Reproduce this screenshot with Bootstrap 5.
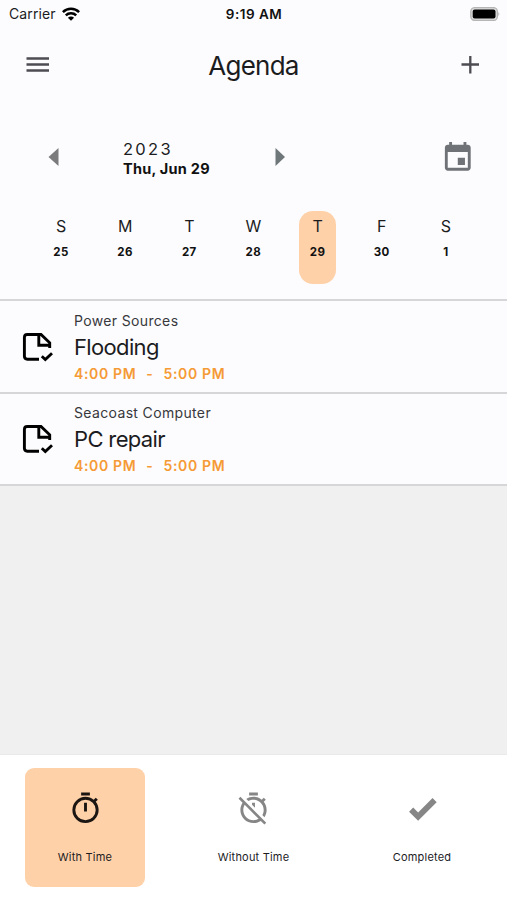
<!DOCTYPE html>
<html lang="en">
<head>
<meta charset="utf-8">
<meta name="viewport" content="width=device-width, initial-scale=1">
<title>Agenda</title>
<link href="https://cdn.jsdelivr.net/npm/bootstrap@5.3.0/dist/css/bootstrap.min.css" rel="stylesheet">
<style>
body{font-family:Inter,"Liberation Sans",sans-serif;background:#f0f0f0;color:#1c1c1f;height:900px;overflow:hidden}
svg{display:block;flex:none}
.t{white-space:nowrap;display:block}
.panel{background:#fcfcfe}
.status{height:27px;padding:0 7px 0 9px;line-height:27px}
.carrier{width:53px;font-size:14px;letter-spacing:.1px}
.clock{font-weight:600;font-size:13.5px;letter-spacing:.5px;color:#111;padding:1px 0 0 1px}
.titlebar{height:75px;padding:1px 25px 0}
.title{font-size:26px;line-height:36px;letter-spacing:-.75px;font-weight:400;padding-top:1px}
.datebar{height:109px;padding:36px 32px 0 47px}
.year{font-size:16.5px;line-height:20px;letter-spacing:2.3px}
.date{font-size:14.5px;line-height:20px;font-weight:700;letter-spacing:.25px;color:#111}
.datebox{width:151px;margin-left:64px;padding-top:1px}
.week{height:88px;padding:0 29px}
.day{width:37px;height:73px;border-radius:14px;padding-top:5px}
.picked{background:#ffd1a9}
.dow{font-size:16px;line-height:20px}
.num{font-size:11.5px;line-height:20px;font-weight:700;margin-top:6px;letter-spacing:.5px;color:#111}
.entry{height:93px;border-top:2px solid #d6d6d8;padding:10px 22px 0}
.entry + .entry{height:92px;padding-top:9px}
.entries{border-bottom:2px solid #d6d6d8}
.who{font-size:14px;line-height:20px;letter-spacing:.35px;color:#38383c}
.what{font-size:22px;line-height:33px;letter-spacing:-.65px}
.when{font-size:14px;line-height:20px;font-weight:600;letter-spacing:.65px;color:#f59a35}
.dash{margin:0 10px}
.tabs{height:146px;padding:13px 25px 0;background:#fff;border-top:1px solid #e9e9e9}
.tab{width:120px;height:119px;border-radius:9px;padding-top:23px}
.tab-label{font-size:11px;line-height:16px;margin-top:23px;letter-spacing:.2px}
</style>
</head>
<body class="d-flex flex-column">
<svg class="d-none"><symbol id="job" viewBox="0 0 36 40"><g fill="none" stroke="#000" stroke-width="2.900"><path d="M17 32.200H5.300Q2.400 32.200 2.400 29.300V10.400Q2.400 7.500 5.300 7.500H19L27.700 15.800V21M16.800 7.500V18.200H27.500"/><path d="M19.800 29.300 23.300 32.500 30 26.300"/></g></symbol></svg>
<header class="panel">
  <div class="status d-flex align-items-center justify-content-between">
    <div class="d-flex align-items-center"><span class="t carrier">Carrier</span>
      <svg width="18" height="14" viewBox="0 0 18 14" fill="none" stroke="#000" stroke-width="2.500"><path d="M.9 5.100C5.400.6 12.600.6 17.100 5.100M3.800 8.300C6.600 5.500 11.400 5.500 14.200 8.300"/><path d="M9 13.800 5.900 10.700C7.600 9 10.400 9 12.100 10.700Z" fill="#000" stroke="none"/></svg>
    </div>
    <span class="t clock position-absolute start-50 translate-middle-x">9:19 AM</span>
    <svg width="30" height="14" viewBox="0 0 30 14"><rect x=".8" y=".6" width="26.600" height="12.800" rx="4" fill="#ddd" stroke="#b5b5b5" stroke-width="1.300"/><rect x="2.700" y="2.400" width="22.800" height="9.200" rx="2" fill="#000"/><path d="M28.300 5q2 2 0 4Z" fill="#b5b5b5"/></svg>
  </div>
  <div class="titlebar d-flex align-items-center justify-content-between">
    <svg width="24" height="24" viewBox="0 0 24 24" stroke="#4c4c52" stroke-width="2.300"><path d="M1.500 5.500H24M1.500 11.500H24M1.500 17.500H24"/></svg>
    <h1 class="t title m-0">Agenda</h1>
    <svg width="24" height="24" viewBox="0 0 24 24" stroke="#4c4c52" stroke-width="2.300"><path d="M3.500 11.500H21M12.300 3V20.500"/></svg>
  </div>
  <div class="datebar d-flex align-items-start">
    <svg class="mt-2" width="12" height="22" viewBox="0 0 12 22" fill="#7b7b7d"><path d="M11.500 2V20L1.500 11Z"/></svg>
    <div class="datebox"><span class="t year">2023</span><span class="t date">Thu, Jun 29</span></div>
    <svg class="mt-2" width="14" height="22" viewBox="0 0 14 22" fill="#6f777b"><path d="M1.500 2V20L11 11Z"/></svg>
    <svg class="ms-auto mt-1" width="33" height="34" viewBox="1 1.500 23 23.700" fill="#6f7377"><path d="M17 12h-5v5h5v-5zM16 1v2H8V1H6v2H5c-1.110 0-1.990.9-1.990 2L3 19c0 1.100.89 2 2 2h14c1.100 0 2-.9 2-2V5c0-1.100-.9-2-2-2h-1V1h-2zm3 18H5V8h14v11z" transform="translate(0 .5)"/></svg>
  </div>
  <div class="week row g-0 text-center">
    <div class="col d-flex justify-content-center"><div class="day"><span class="t dow">S</span><span class="t num">25</span></div></div>
    <div class="col d-flex justify-content-center"><div class="day"><span class="t dow">M</span><span class="t num">26</span></div></div>
    <div class="col d-flex justify-content-center"><div class="day"><span class="t dow">T</span><span class="t num">27</span></div></div>
    <div class="col d-flex justify-content-center"><div class="day"><span class="t dow">W</span><span class="t num">28</span></div></div>
    <div class="col d-flex justify-content-center"><div class="day picked"><span class="t dow">T</span><span class="t num">29</span></div></div>
    <div class="col d-flex justify-content-center"><div class="day"><span class="t dow">F</span><span class="t num">30</span></div></div>
    <div class="col d-flex justify-content-center"><div class="day"><span class="t dow">S</span><span class="t num">1</span></div></div>
  </div>
</header>
<main class="entries panel">
  <section class="entry d-flex">
    <svg class="mt-3 me-3" width="36" height="40"><use href="#job"/></svg>
    <div><span class="t who">Power Sources</span><span class="t what">Flooding</span><span class="t when">4:00 PM<span class="dash">-</span>5:00 PM</span></div>
  </section>
  <section class="entry d-flex">
    <svg class="mt-3 me-3" width="36" height="40"><use href="#job"/></svg>
    <div><span class="t who">Seacoast Computer</span><span class="t what">PC repair</span><span class="t when">4:00 PM<span class="dash">-</span>5:00 PM</span></div>
  </section>
</main>
<nav class="tabs mt-auto d-flex justify-content-between" aria-label="Agenda filter">
  <div class="tab picked d-flex flex-column align-items-center">
    <svg width="35" height="35" viewBox="0 0 24 24" fill="#1c1613"><path d="M12 20a7 7 0 0 1 0-14 7 7 0 0 1 0 14M19.030 7.390l1.420-1.420c-.45-.51-.9-.97-1.410-1.410L17.620 6C16.070 4.740 14.120 4 12 4a9 9 0 0 0 0 18c5 0 9-4.030 9-9 0-2.120-.74-4.070-1.970-5.610M11 14h2V8h-2M15 1H9v2h6z" fill-rule="evenodd"/></svg>
    <span class="t tab-label">With Time</span>
  </div>
  <div class="tab d-flex flex-column align-items-center">
    <svg width="35" height="35" viewBox="0 0 24 24" fill="#868686"><path d="M19.040 4.550l-1.420 1.420C16.070 4.740 14.120 4 12 4c-1.830 0-3.530.55-4.950 1.480l1.460 1.460C9.530 6.350 10.730 6 12 6c3.870 0 7 3.130 7 7 0 1.270-.35 2.470-.94 3.490l1.450 1.450C20.450 16.530 21 14.830 21 13c0-2.120-.74-4.070-1.970-5.610l1.420-1.420-1.410-1.420zM15 1H9v2h6V1zm-4 8.440l2 2V8h-2v1.440zM3.020 4L1.750 5.270 4.500 8.030C3.550 9.450 3 11.160 3 13c0 4.970 4.020 9 9 9 1.840 0 3.550-.55 4.980-1.500l2.500 2.500 1.270-1.270-7.710-7.710L3.020 4zM12 20c-3.870 0-7-3.130-7-7 0-1.280.35-2.480.95-3.520l9.560 9.560c-1.030.61-2.230.96-3.510.96z"/></svg>
    <span class="t tab-label">Without Time</span>
  </div>
  <div class="tab d-flex flex-column align-items-center">
    <svg width="35" height="35" viewBox="0 0 24 24" fill="#868686"><path d="M9 20.420 2.790 14.210 5.620 11.380 9 14.770 18.880 4.880 21.710 7.710Z"/></svg>
    <span class="t tab-label">Completed</span>
  </div>
</nav>
<script src="https://cdn.jsdelivr.net/npm/bootstrap@5.3.0/dist/js/bootstrap.bundle.min.js"></script>
</body>
</html>
